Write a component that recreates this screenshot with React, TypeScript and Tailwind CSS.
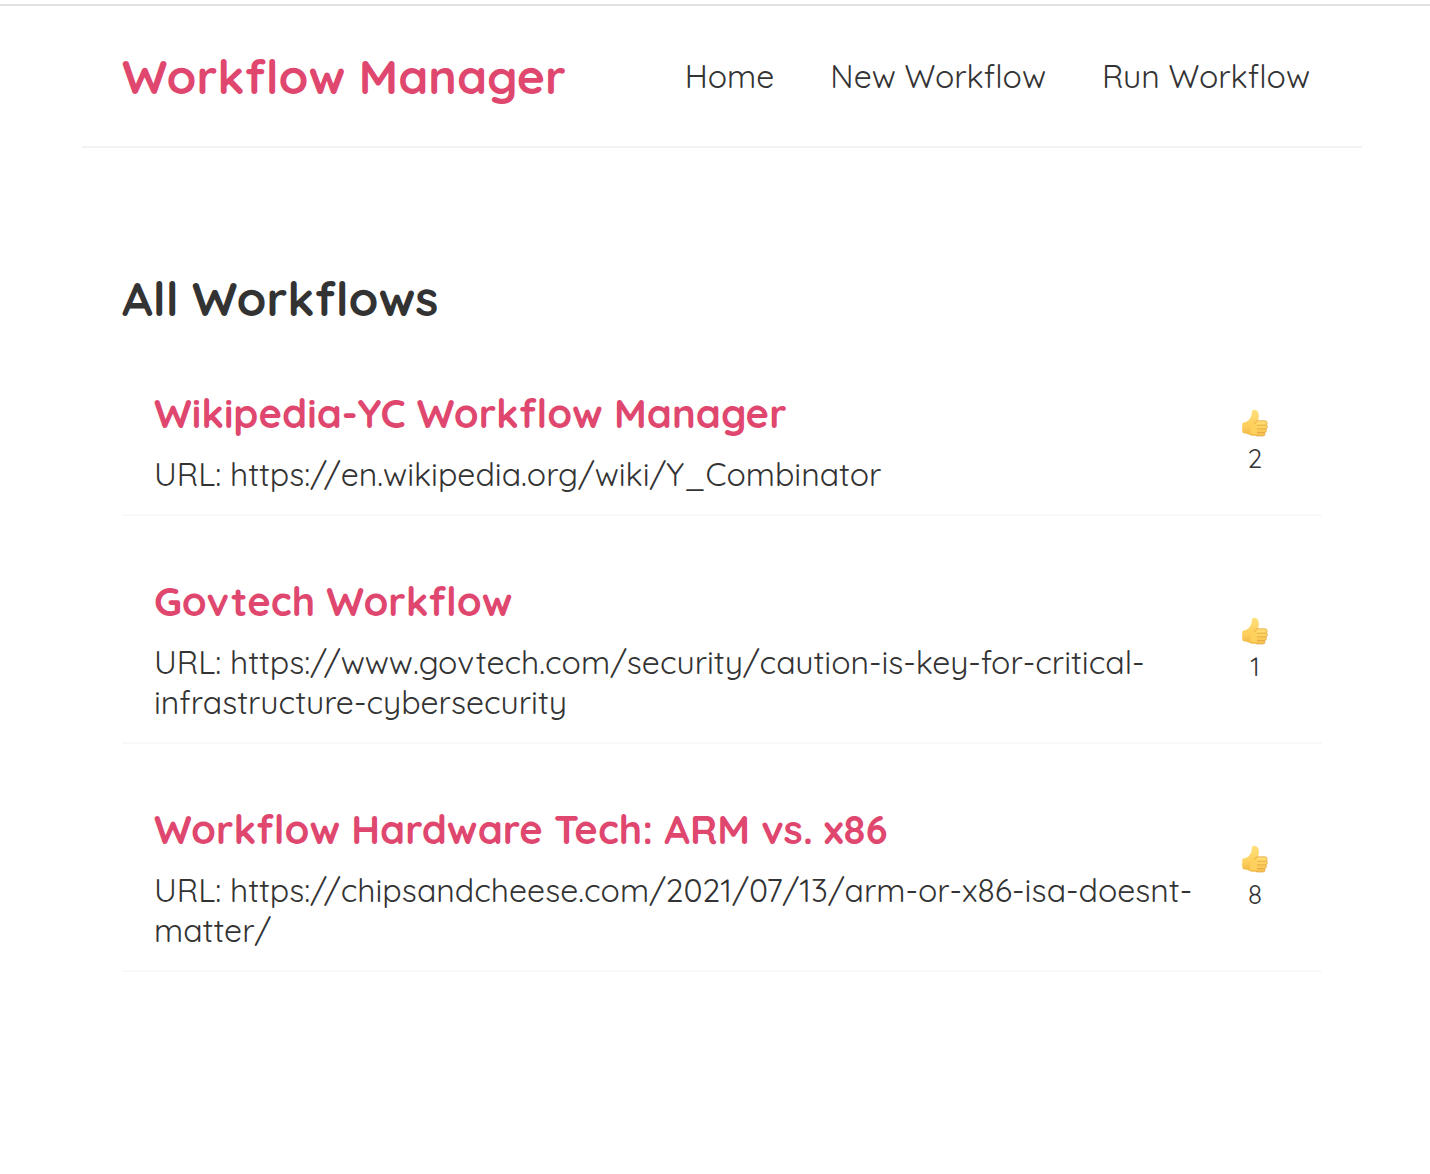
const workflows = [
  { title: "Wikipedia-YC Workflow Manager", url: "https://en.wikipedia.org/wiki/Y_Combinator", votes: 2 },
  { title: "Govtech Workflow", url: "https://www.govtech.com/security/caution-is-key-for-critical-infrastructure-cybersecurity", votes: 1 },
  { title: "Workflow Hardware Tech: ARM vs. x86", url: "https://chipsandcheese.com/2021/07/13/arm-or-x86-isa-doesnt-matter/", votes: 8 },
];

function ThumbsUp() {
  return (
    <svg viewBox="0 0 26 28" className="h-7 w-[26px]" aria-hidden="true">
      <defs>
        <linearGradient id="skin" x1="0" y1="0" x2="0" y2="1">
          <stop offset="0" stopColor="#ffe07c" />
          <stop offset="0.6" stopColor="#fed05c" />
          <stop offset="1" stopColor="#f0b545" />
        </linearGradient>
      </defs>
      {/* palm, wrist and thumb */}
      <path
        d="M1.200 13.600C4 13.200 6.500 12 8 9.500C9.300 7.500 9.800 6 9.800 3.600C9.800 1.700 10.800.7 12.500.8C15.500 1 17 4 16.900 7.200C16.800 9 16.400 10.500 16 12L17 25.500C14 27.300 9.500 27.300 7 25.600C5.500 24.600 3.500 24.800 1.500 24.300C.2 23.800.1 20.800.2 18.500C.2 16 .3 13.900 1.200 13.600Z"
        fill="url(#skin)"
      />
      {/* curled fingers, top to bottom */}
      <g stroke="#dfa03a" strokeWidth="0.7">
        <rect x="13.500" y="22.800" width="9.500" height="4.200" rx="2.100" fill="#f7c353" />
        <rect x="12.800" y="19.300" width="11.600" height="4.300" rx="2.100" fill="#fbcb58" />
        <rect x="12.800" y="15.600" width="12.600" height="4.300" rx="2.100" fill="#fed364" />
        <rect x="13.200" y="11.800" width="12" height="4.400" rx="2.200" fill="#ffdb70" />
      </g>
      <path d="M9.500 12.800C11.500 11.500 14 11.600 15 13V25C12.500 26 9.500 25.500 8 24Z" fill="#fed05c" />
      <path d="M15.200 12.500C13.500 12.600 12.500 13.500 12.300 15" stroke="#eab04a" strokeWidth="0.8" fill="none" />
    </svg>
  );
}

export default function App() {
  return (
    <div className="min-h-screen border-t-4 border-white bg-white font-['Quicksand','Lato',sans-serif] text-[#333]">
      <div className="border-t-2 border-[#e1e1e1]" />
      <div className="pl-[14px]">
        <div className="mx-auto max-w-7xl">
          <header className="flex h-[142px] items-center justify-between border-b-2 border-[#f2f2f2] px-10">
            <h1 className="text-5xl font-bold text-[#df476f]">Workflow Manager</h1>
            <nav className="flex gap-14 pr-3 text-[32px]">
              <a href="#home">Home</a>
              <a href="#new">New Workflow</a>
              <a href="#run">Run Workflow</a>
            </nav>
          </header>
          <main className="px-10 pt-[120px]">
            <h2 className="text-5xl leading-[60px] font-bold">All Workflows</h2>
            {workflows.map((w) => (
              <article
                key={w.title}
                className="flex items-center justify-between border-b-2 border-[#f9f9f9] pt-15 pr-[54px] pb-5 pl-8"
              >
                <div className="max-w-[1048px]">
                  <h3 className="mb-4 text-[40px] leading-[50px] font-bold text-[#df476f]">{w.title}</h3>
                  <p className="text-[32px] leading-10">{`URL: ${w.url}`}</p>
                </div>
                <button
                  type="button"
                  aria-label={`Upvote ${w.title}`}
                  className="flex flex-col items-center gap-0.5 pt-1.5 text-[26px] leading-10"
                >
                  <ThumbsUp />
                  {w.votes}
                </button>
              </article>
            ))}
          </main>
        </div>
      </div>
    </div>
  );
}
